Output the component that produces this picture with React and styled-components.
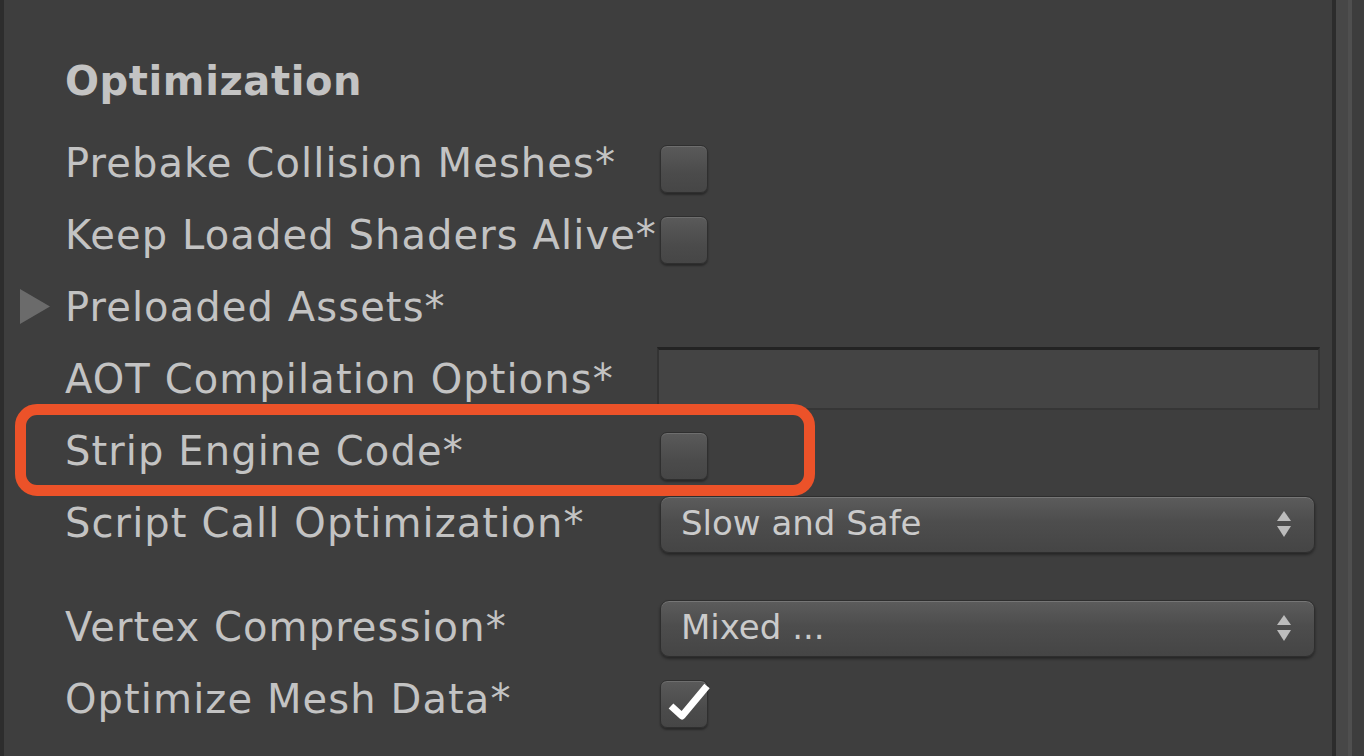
import React from "react";
import styled, { createGlobalStyle } from "styled-components";

const GlobalStyle = createGlobalStyle`
	html, body {
		margin: 0;
		padding: 0;
		background: #3e3e3e;
		overflow: hidden;
	}
	* { box-sizing: border-box; }
`

const Window = styled.div`
	display: flex;
	height: 100vh;
	font-family: "DejaVu Sans", "Liberation Sans", sans-serif;
	color: #c3c3c3;
`

const LeftEdge = styled.div`
	width: 4px;
	background: #2d2d2d;
`

const Inspector = styled.div`
	flex: 1;
	display: flex;
	flex-direction: column;
	padding-top: 45px;
`

const Scrollbar = styled.div`
	width: 32px;
	background: linear-gradient(to right, #2c2c2c 0 4px, #474747 4px 16px, #4f4f4f 16px 20px, #3d3d3d 20px);
`

const Header = styled.div`
	height: 83px;
	padding: 0 0 11px 61px;
	display: flex;
	align-items: center;
	font-size: 40px;
	font-weight: bold;
	letter-spacing: 0.6px;
	line-height: 1;
`

const Row = styled.div`
	position: relative;
	height: 72px;
	display: grid;
	grid-template-columns: 656px 1fr;
	align-items: center;
	padding-right: 17px;
`

const Spacer = styled.div`
	height: 32px;
`

const Label = styled.div`
	display: flex;
	align-items: center;
	padding-left: 61px;
	font-size: 40px;
	letter-spacing: 1.1px;
	line-height: 1;
	white-space: nowrap;
	margin-top: -3px;
`

const Arrow = styled.svg`
	width: 30px;
	height: 35px;
	margin-left: -45px;
	margin-right: 15px;
	fill: #6b6b6b;
`

const Box = styled.div`
	position: relative;
	width: 48px;
	height: 48px;
	margin-top: ${p => p.$offset || 10}px;
	border-radius: 7px;
	border: 1px solid #2f2f2f;
	background: linear-gradient(#5a5a5a, #4b4b4b 60%, #464646);
	box-shadow: 0 2px 2px rgba(0, 0, 0, 0.35), inset 0 1px 0 rgba(255, 255, 255, 0.12);
	svg {
		position: absolute;
		left: -1px;
		top: -1px;
		overflow: visible;
	}
`

const TextField = styled.div`
	height: 63px;
	margin: -3px -5px 0 -3px;
	background: #444444;
	border-top: 3px solid #232323;
	border-left: 2px solid #333;
	border-right: 2px solid #333;
	border-bottom: 2px solid #363636;
`

const Dropdown = styled.div`
	height: 57px;
	display: flex;
	align-items: center;
	justify-content: space-between;
	padding: 0 22px 0 20px;
	border-radius: 9px;
	border: 1px solid #2e2e2e;
	background: linear-gradient(#5c5c5c, #4d4d4d 45%, #454545);
	box-shadow: 0 2px 3px rgba(0, 0, 0, 0.4), inset 0 1px 0 rgba(255, 255, 255, 0.16);
	font-size: 34px;
	color: #cbcbcb;
	line-height: 1;
	span { margin-top: -2px; }
	svg { fill: #bcbcbc; }
`

const Highlight = styled.div`
	position: absolute;
	left: 11px;
	top: -12px;
	width: 800px;
	height: 92px;
	border: 11px solid #ec5229;
	border-radius: 22px;
	pointer-events: none;
`

const Checkbox = ({ checked, offset }) => (
	<Box $offset={offset}>
		{checked && <svg width="48" height="48" viewBox="0 0 48 48">
			<path d="M11 26 L22 36 L47 6" fill="none" stroke="#fff" strokeWidth="7" strokeLinejoin="round" />
		</svg>}
	</Box>
)

const Select = ({ value }) => (
	<Dropdown>
		<span>{value}</span>
		<svg width="16" height="30" viewBox="0 0 16 30">
			<path d="M8 2 L15 12 L1 12 Z" />
			<path d="M1 17 L15 17 L8 28 Z" />
		</svg>
	</Dropdown>
)

const App = () => {
	return (
		<>
			<GlobalStyle />
			<Window>
				<LeftEdge />
				<Inspector>
					<Header>Optimization</Header>
					<Row>
						<Label>Prebake Collision Meshes*</Label>
						<Checkbox />
					</Row>
					<Row>
						<Label>Keep Loaded Shaders Alive*</Label>
						<Checkbox offset={8} />
					</Row>
					<Row>
						<Label>
							<Arrow viewBox="0 0 30 35"><path d="M0 0 L30 17.5 L0 35 Z" /></Arrow>
							Preloaded Assets*
						</Label>
					</Row>
					<Row>
						<Label>AOT Compilation Options*</Label>
						<TextField />
					</Row>
					<Row>
						<Label>Strip Engine Code*</Label>
						<Checkbox offset={8} />
						<Highlight />
					</Row>
					<Row>
						<Label>Script Call Optimization*</Label>
						<Select value="Slow and Safe" />
					</Row>
					<Spacer />
					<Row>
						<Label>Vertex Compression*</Label>
						<Select value="Mixed ..." />
					</Row>
					<Row>
						<Label>Optimize Mesh Data*</Label>
						<Checkbox checked offset={8} />
					</Row>
				</Inspector>
				<Scrollbar />
			</Window>
		</>
	)
}

export default App
